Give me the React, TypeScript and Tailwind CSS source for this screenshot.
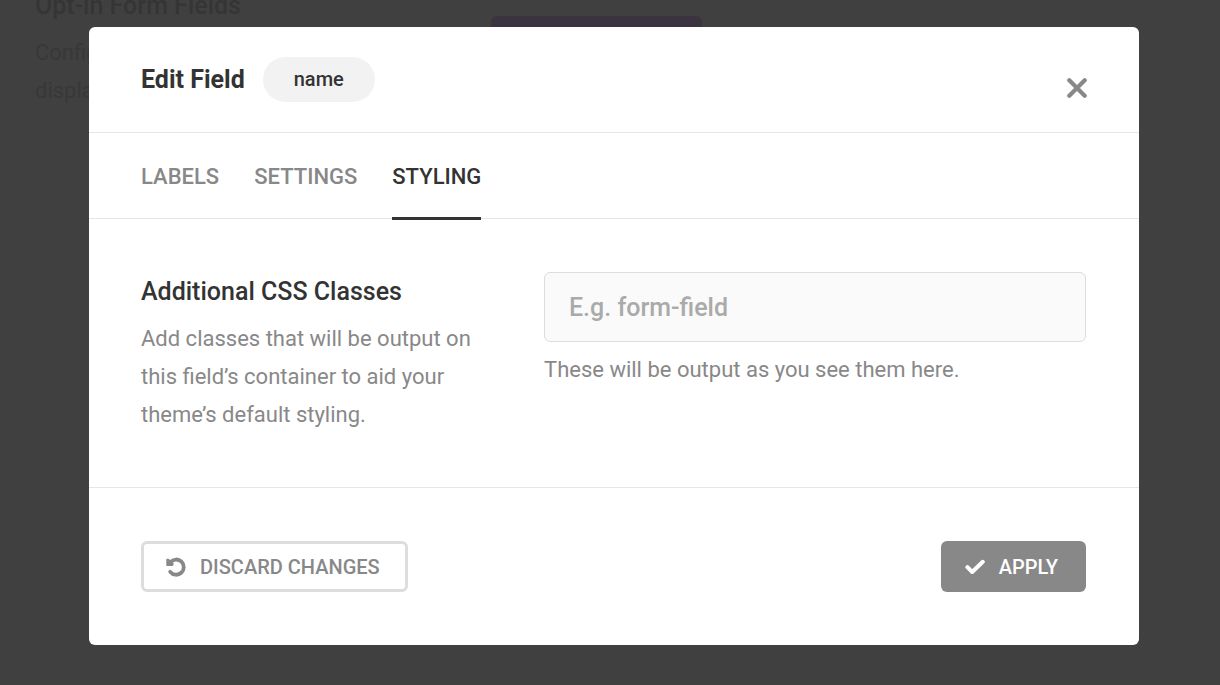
import React, { useState } from "react"

const tabs = ["Labels", "Settings", "Styling"]

const CloseIcon = () => (
    <svg className="h-5 w-5" viewBox="0 0 20 20" fill="none" stroke="currentColor" strokeWidth="4.2" strokeLinecap="round" aria-hidden="true">
        <path d="M2.3 2.3l15.4 15.4M17.7 2.3L2.3 17.7" />
    </svg>
)

const UndoIcon = () => (
    <svg className="h-5 w-5" viewBox="0 0 20 20" fill="none" stroke="currentColor" strokeWidth="3.8" aria-hidden="true">
        <path d="M4.4 5.2A7.6 7.6 0 1 1 4.2 14.8" strokeLinecap="round" />
        <path d="M1 2.4v5.8h5.6l.4-1.6-4.8-4.2z" fill="currentColor" strokeWidth="1.4" strokeLinejoin="round" />
    </svg>
)

const CheckIcon = () => (
    <svg className="h-5 w-5" viewBox="0 0 20 20" fill="none" stroke="currentColor" strokeWidth="4" strokeLinecap="round" strokeLinejoin="round" aria-hidden="true">
        <path d="M2.4 10.2l4.8 4.8L17.8 4.8" />
    </svg>
)

export default function App() {
    const [tab, setTab] = useState("Styling")
    const [classes, setClasses] = useState("")

    return (
        <div className="relative h-screen overflow-hidden bg-[#404040] font-[Roboto,sans-serif]">
            <div className="flex px-[35px] text-[#353535]">
                <div className="w-[456px] shrink-0 -mt-3">
                    <h1 className="text-[25px] leading-9 font-medium">Opt-in Form Fields</h1>
                    <p className="mt-2.5 text-[22px] leading-[38px] text-[#383838]">Configure<br />display</p>
                </div>
                <div className="mt-4 h-12 w-[211px] rounded-md bg-[#3b333f]"></div>
            </div>

            <div className="absolute inset-0 pt-[27px] pr-[81px] pl-[89px]">
                <div role="dialog" aria-labelledby="dialog-title" className="rounded-md bg-white text-[#333]">
                    <header className="flex items-center justify-between border-b border-[#e6e6e6] px-[52px] py-[30px]">
                        <div className="flex items-center gap-[18px]">
                            <h2 id="dialog-title" className="text-[25px] leading-[45px] font-bold">Edit Field</h2>
                            <span className="rounded-full bg-[#f2f2f2] px-[31px] text-[20px] leading-[45px] font-medium">name</span>
                        </div>
                        <button aria-label="Close" className="mt-4 cursor-pointer text-[#888]"><CloseIcon /></button>
                    </header>

                    <nav role="tablist" className="flex gap-[35px] border-b border-[#e6e6e6] px-[52px]">
                        {tabs.map((name) => (
                            <button key={name} role="tab" aria-selected={tab === name} onClick={() => setTab(name)} className={`-mb-0.5 cursor-pointer border-b-3 pt-[25px] pb-[21px] text-[22px] leading-[38px] font-medium uppercase ${tab === name ? "border-[#333] text-[#333]" : "border-transparent text-[#888]"}`}>{name}</button>
                        ))}
                    </nav>

                    <div className="flex justify-between gap-16 border-b border-[#e6e6e6] py-[53px] pr-[53px] pl-[52px]">
                        <div className="min-w-0 flex-1">
                            <label htmlFor="css-classes" className="block text-[25px] leading-10 font-medium">Additional CSS Classes</label>
                            <p className="mt-2 text-[22px] leading-[38px] text-[#888]">Add classes that will be output on this field’s container to aid your theme’s default styling.</p>
                        </div>
                        <div className="w-[542px]">
                            <input id="css-classes" type="text" value={classes} onChange={(e) => setClasses(e.target.value)} placeholder="E.g. form-field" className="block h-[70px] w-full rounded-md border border-[#ddd] bg-[#fafafa] px-6 text-[25px] font-medium placeholder:text-[#aaa]" />
                            <p className="mt-2 text-[22px] leading-10 text-[#888]">These will be output as you see them here.</p>
                        </div>
                    </div>

                    <footer className="flex items-center justify-between py-[53px] pr-[53px] pl-[52px]">
                        <button className="flex h-[51px] cursor-pointer items-center gap-3.5 rounded-md border-3 border-[#ddd] pr-[25px] pl-[22px] text-[20px] font-medium text-[#888] uppercase"><UndoIcon />Discard Changes</button>
                        <button className="flex h-[51px] cursor-pointer items-center gap-3.5 rounded-md bg-[#888] pr-7 pl-6 text-[20px] font-medium text-white uppercase"><CheckIcon />Apply</button>
                    </footer>
                </div>
            </div>
        </div>
    )
}
